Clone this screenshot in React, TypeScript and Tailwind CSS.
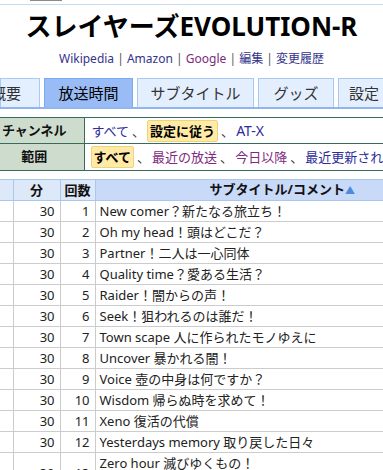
const tabs = [
  { label: "概要", w: "w-[40px] justify-end pr-[18px]" },
  { label: "放送時間", w: "w-[89px] justify-center", active: true },
  { label: "サブタイトル", w: "w-[117px] justify-center" },
  { label: "グッズ", w: "w-[76px] justify-center" },
  { label: "設定", w: "w-[60px] justify-start pl-[10px]" },
];

const episodes: [number, string][] = [
  [1, "New comer？新たなる旅立ち！"],
  [2, "Oh my head！頭はどこだ？"],
  [3, "Partner！二人は一心同体"],
  [4, "Quality time？愛ある生活？"],
  [5, "Raider！闇からの声！"],
  [6, "Seek！狙われるのは誰だ！"],
  [7, "Town scape 人に作られたモノゆえに"],
  [8, "Uncover 暴かれる闇！"],
  [9, "Voice 壺の中身は何ですか？"],
  [10, "Wisdom 帰らぬ時を求めて！"],
  [11, "Xeno 復活の代償"],
  [12, "Yesterdays memory 取り戻した日々"],
];

function Pick({ children }: { children: React.ReactNode }) {
  return (
    <span className="inline-block rounded-[2px] border border-[#f0d27c] bg-[#ffeaa6] px-[2px] font-bold leading-[20px] text-black">
      {children}
    </span>
  );
}

const sep = <span className="ml-[3px] mr-[2px] text-[#333]">、</span>;

export default function App() {
  return (
    <div className="h-[470px] w-[383px] overflow-hidden bg-white font-['Noto_Sans','Noto_Sans_CJK_JP',sans-serif] text-[#222]">
      <div className="h-[5px] border-b border-[#c6dcf4]">
        <div className="ml-[30px] h-[1px] w-[32px] bg-[#8a8a8a]" />
      </div>

      <h1 className="mt-[6px] text-center text-[26px] leading-[30px] font-bold text-black">
        スレイヤーズEVOLUTION-R
      </h1>

      <div className="mt-[9px] text-center text-[12px] leading-[17px] text-[#555]">
        <a className="text-[#34348c]">Wikipedia</a> | <a className="text-[#34348c]">Amazon</a> |{" "}
        <a className="text-[#7a2a7a]">Google</a> | <a className="text-[#34348c]">編集</a> |{" "}
        <a className="text-[#34348c]">変更履歴</a>
      </div>

      <div className="mt-[11px] flex h-[31px] gap-[4px] overflow-hidden border-b-2 border-[#90b6f0] whitespace-nowrap">
        {tabs.map((t) => (
          <div
            key={t.label}
            className={`flex h-[29px] shrink-0 items-center border border-b-0 text-[15px] ${t.w} ${
              t.active ? "border-[#7fa9ee] bg-[#9abcf6] text-black" : "border-[#a9c9f3] bg-[#e3efff] text-[#333]"
            }`}
          >
            {t.label}
          </div>
        ))}
      </div>

      <table className="mt-[8px] w-[470px] table-fixed border-collapse text-[13px] whitespace-nowrap">
        <colgroup>
          <col className="w-[84px]" />
          <col />
        </colgroup>
        <tbody>
          <tr className="h-[26px]">
            <th className="border-y border-r border-[#386b5b] bg-[#cddccd] pr-[15px] text-center font-bold text-[#111]">
              チャンネル
            </th>
            <td className="border border-l-0 border-[#386b5b] pl-[7px]">
              <a className="text-[#2c2c9c]">すべて</a>
              {sep}
              <Pick>設定に従う</Pick>
              {sep}
              <a className="text-[14px] text-[#2c2c9c]">AT-X</a>
            </td>
          </tr>
          <tr className="h-[27px]">
            <th className="border-y border-r border-[#386b5b] bg-[#cddccd] pr-[15px] text-center font-bold text-[#111]">
              範囲
            </th>
            <td className="border border-l-0 border-[#386b5b] pl-[6px]">
              <Pick>すべて</Pick>
              {sep}
              <a className="text-[#7e2a7e]">最近の放送</a>
              {sep}
              <a className="text-[#7e2a7e]">今日以降</a>
              {sep}
              <a className="text-[#2c2c9c]">最近更新されたもの</a>
            </td>
          </tr>
        </tbody>
      </table>

      <table className="mt-[8px] w-[470px] table-fixed border-collapse text-[13px]">
        <colgroup>
          <col className="w-[13px]" />
          <col className="w-[47px]" />
          <col className="w-[35px]" />
          <col />
        </colgroup>
        <thead>
          <tr className="h-[21px] leading-[19px] font-bold text-[#111]">
            <th className="border-y border-r border-[#aac8ec] bg-[#dde9f9]" />
            <th className="border border-[#aac8ec] bg-[#dde9f9] text-center">分</th>
            <th className="border border-[#aac8ec] bg-[#dde9f9] text-center">回数</th>
            <th className="border border-[#aac8ec] bg-[#c9d9f8] text-center">
              サブタイトル/コメント<span className="text-[10px] text-[#4f8bd6]">▲</span>
            </th>
          </tr>
        </thead>
        <tbody>
          {episodes.map(([n, title]) => (
            <tr key={n} className="h-[21px] leading-[20px]">
              <td className="border-y border-r border-[#cccccc]" />
              <td className="border border-[#cccccc] pr-[5px] text-right">30</td>
              <td className="border border-[#cccccc] pr-[5px] text-right">{n}</td>
              <td className="border border-[#cccccc] pl-[4px] whitespace-nowrap">{title}</td>
            </tr>
          ))}
          <tr className="leading-[20px]">
            <td className="border-y border-r border-[#cccccc]" />
            <td className="border border-[#cccccc] pr-[5px] text-right">30</td>
            <td className="border border-[#cccccc] pr-[5px] text-right">13</td>
            <td className="border border-[#cccccc] pl-[4px]">
              <div>Zero hour 滅びゆくもの！</div>
              <div className="text-[#666]">最終回</div>
            </td>
          </tr>
        </tbody>
      </table>
    </div>
  );
}
